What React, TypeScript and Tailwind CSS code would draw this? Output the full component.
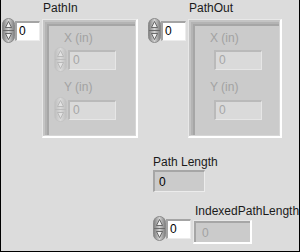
import React from "react";

// LabVIEW-style front panel: two cluster arrays plus two numeric indicators

function Spinner({ disabled = false, hidden = false }: { disabled?: boolean; hidden?: boolean }) {
  const id = disabled ? "spinOff" : "spinOn";
  const edge = disabled ? "#bdbdbd" : "#7c7c7c";
  const mid = disabled ? "#dadada" : "#d2d2d2";
  const arrow = disabled ? "#b0b0b0" : "#4e4e4e";
  return (
    <svg width={13} height={25} viewBox="0 0 13 25" className={hidden ? "invisible shrink-0" : "shrink-0"}>
      <defs>
        <linearGradient id={id} x1="0" x2="1" y1="0" y2="0">
          <stop offset="0" stopColor={edge} />
          <stop offset="0.5" stopColor={mid} />
          <stop offset="1" stopColor={edge} />
        </linearGradient>
      </defs>
      <rect x={0.5} y={0.5} width={12} height={24} rx={6} fill={`url(#${id})`} stroke={disabled ? "#c4c4c4" : "#8a8a8a"} />
      <line x1={1} x2={12} y1={12.5} y2={12.5} stroke={disabled ? "#bcbcbc" : "#6c6c6c"} />
      <path d="M6.5 3.5 L9.5 9.5 H3.5 Z" fill={disabled ? "#e2e2e2" : "#efefef"} stroke={arrow} strokeWidth={0.8} />
      <path d="M6.5 21.5 L9.5 15.5 H3.5 Z" fill={disabled ? "#e2e2e2" : "#efefef"} stroke={arrow} strokeWidth={0.8} />
    </svg>
  );
}

function IndexBox() {
  return (
    <div className="flex items-center">
      <Spinner />
      <div className="w-[25px] h-[20px] bg-white border-t-2 border-l-2 border-[#a4a4a4] border-r border-b border-r-[#ececec] border-b-[#ececec] pl-[2px] flex items-center text-black">
        0
      </div>
    </div>
  );
}

function ClusterNumeric({ label, indicator }: { label: string; indicator?: boolean }) {
  return (
    <>
      <div className="ml-[10px] text-[#a2a2a2]">{label}</div>
    </>
  );
}

function ClusterRow({ indicator }: { indicator?: boolean }) {
  return (
    <div className="flex items-center gap-px">
      <Spinner disabled hidden={indicator} />
      <div className="w-[48px] h-[20px] bg-[#dadada] border-t-2 border-l-2 border-[#bababa] border-r border-b border-r-[#e6e6e6] border-b-[#e6e6e6] pl-[3px] flex items-center text-[#a6a6a6]">
        0
      </div>
    </div>
  );
}

function Cluster({ width, indicator }: { width: string; indicator?: boolean }) {
  return (
    <div className={`${width} h-[119px] mt-[4px] border-t border-l border-[#e8e8e8] border-r-2 border-b-2 border-r-white border-b-white`}>
      <div className="h-full border-t-2 border-l-2 border-[#c4c4c4] border-r border-b border-r-[#d6d6d6] border-b-[#d6d6d6]">
        <div className="h-full border-t-2 border-l-2 border-[#b4b4b4]">
          <div className="h-full border-t-2 border-l-2 border-[#a6a6a6] bg-[#cbcbcb] pl-[5px] pt-[5px]">
            <ClusterNumeric label="X (in)" indicator={indicator} />
            <div className="mt-[2px]">
              <ClusterRow indicator={indicator} />
            </div>
            <div className="mt-[8px]">
              <ClusterNumeric label="Y (in)" indicator={indicator} />
            </div>
            <div className="mt-[3px]">
              <ClusterRow indicator={indicator} />
            </div>
          </div>
        </div>
      </div>
    </div>
  );
}

function ArrayGroup({ label, width, indicator }: { label: string; width: string; indicator?: boolean }) {
  return (
    <div className="flex">
      <div className="mt-[17px]">
        <IndexBox />
      </div>
      <div className="ml-[2px] flex flex-col">
        <div className="pl-px h-[14px]">{label}</div>
        <Cluster width={width} indicator={indicator} />
      </div>
    </div>
  );
}

export default function App() {
  return (
    <div className="w-[300px] h-[252px] bg-[#dcdcdc] border-l border-r border-b border-black font-['Liberation_Sans',Arial,sans-serif] text-[12px] leading-[14px] text-[#1a1a1a] overflow-hidden">
      <div className="flex pt-px ml-px">
        <ArrayGroup label="PathIn" width="w-[96px]" />
        <div className="ml-[10px]">
          <ArrayGroup label="PathOut" width="w-[94px]" indicator />
        </div>
      </div>

      <div className="ml-[152px] flex flex-col">
        <div className="mt-[17px] h-[14px]">Path Length</div>
        <div className="mt-px w-[52px] h-[22px] bg-[#cbcbcb] border-t-2 border-l-2 border-[#a6a6a6] border-r border-b border-r-[#ececec] border-b-[#ececec] pl-[4px] flex items-center text-black">
          0
        </div>

        <div className="flex mt-[12px]">
          <div className="mt-[12px]">
            <IndexBox />
          </div>
          <div className="ml-[2px] flex flex-col">
            <div className="pl-[2px] h-[14px] whitespace-nowrap">IndexedPathLength</div>
            <div className="mt-[2px] w-[59px] h-[24px] border-t border-l border-[#e8e8e8] border-r-2 border-b-2 border-r-white border-b-white">
              <div className="h-full border-t-2 border-l-2 border-[#a6a6a6] bg-[#cbcbcb] pl-[6px] flex items-center text-[#a2a2a2]">
                0
              </div>
            </div>
          </div>
        </div>
      </div>
    </div>
  );
}
